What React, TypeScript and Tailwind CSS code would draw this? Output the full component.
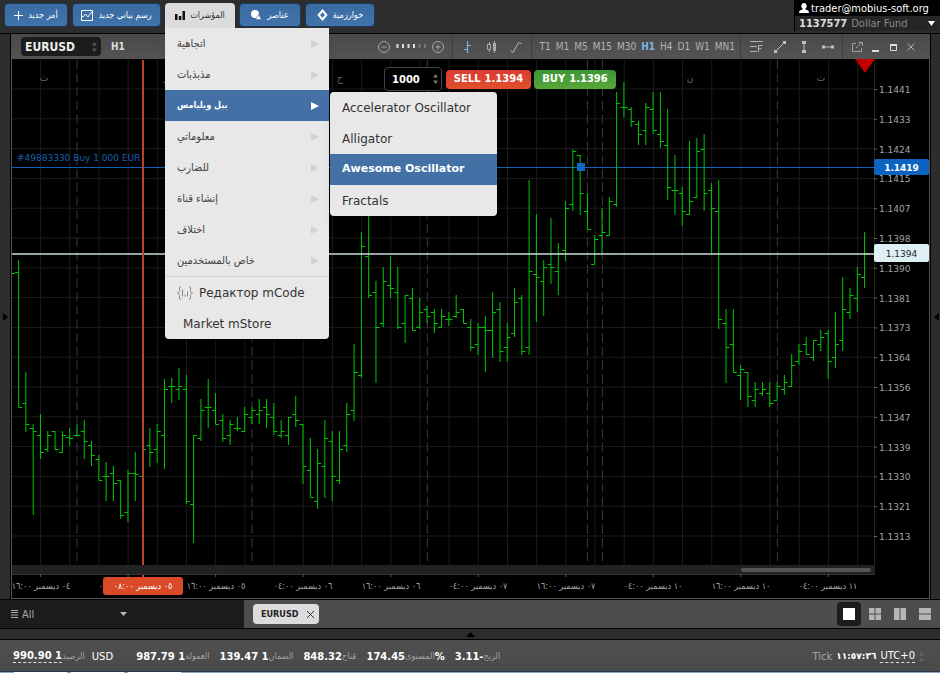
import React, { useState } from 'react';

// [high, low, open, close] in chart coordinates, oldest bar first
const BARS: number[][] = [
  [260, 407, 272, 407], [372, 432, 403, 424], [424, 515, 428, 431], [414, 459, 435, 452],
  [431, 452, 449, 435], [431, 450, 431, 449], [431, 453, 452, 435], [428, 446, 437, 438],
  [424, 436, 435, 435], [420, 459, 431, 441], [441, 466, 445, 455], [455, 480, 459, 480],
  [462, 501, 476, 476], [466, 501, 473, 483], [480, 519, 480, 515], [470, 522, 512, 473],
  [452, 501, 473, 474], [428, 505, 476, 449], [428, 467, 445, 452], [424, 463, 449, 431],
  [379, 469, 435, 389], [378, 403, 386, 386], [368, 400, 389, 386], [375, 504, 389, 501],
  [435, 543, 504, 435], [399, 441, 438, 410], [379, 428, 407, 407], [393, 424, 410, 424],
  [414, 442, 420, 438], [420, 445, 435, 424], [417, 431, 428, 428], [407, 432, 431, 414],
  [407, 424, 417, 410], [399, 424, 414, 410], [399, 428, 407, 414], [403, 435, 417, 431],
  [420, 438, 435, 431], [417, 445, 435, 417], [396, 427, 414, 420], [424, 484, 424, 466],
  [438, 497, 470, 497], [449, 509, 501, 463], [420, 498, 466, 438], [431, 501, 441, 476],
  [431, 484, 480, 449], [403, 452, 445, 414], [344, 421, 410, 372], [232, 378, 375, 246],
  [200, 298, 256, 295], [281, 383, 292, 327], [267, 327, 323, 281], [256, 298, 285, 288],
  [267, 329, 292, 327], [295, 343, 323, 295], [288, 330, 298, 330], [298, 329, 327, 312],
  [306, 323, 309, 316], [309, 333, 312, 323], [309, 327, 327, 316], [312, 326, 319, 319],
  [295, 318, 316, 312], [309, 323, 309, 323], [319, 351, 327, 347], [323, 355, 344, 327],
  [316, 372, 327, 330], [292, 358, 330, 312], [302, 362, 309, 351], [323, 362, 347, 337],
  [288, 337, 333, 302], [295, 355, 298, 351], [180, 355, 347, 271], [214, 322, 274, 277],
  [260, 316, 281, 267], [218, 284, 264, 267], [243, 295, 271, 253], [201, 261, 250, 208],
  [149, 211, 204, 151], [155, 215, 155, 193], [193, 229, 211, 229], [235, 264, 264, 239],
  [208, 253, 235, 232], [197, 236, 235, 201], [92, 207, 204, 103], [82, 117, 107, 107],
  [107, 127, 109, 121], [121, 145, 124, 134], [103, 145, 130, 107], [92, 134, 109, 130],
  [92, 148, 134, 141], [109, 200, 145, 187], [155, 215, 190, 190], [187, 226, 193, 211],
  [141, 215, 214, 201], [138, 198, 197, 151], [134, 211, 149, 193], [183, 253, 190, 208],
  [180, 329, 211, 319], [309, 383, 323, 347], [309, 372, 344, 372], [365, 400, 375, 369],
  [372, 407, 372, 396], [382, 407, 400, 389], [382, 396, 393, 389], [382, 407, 393, 403],
  [382, 400, 400, 386], [375, 395, 389, 382], [354, 387, 386, 365], [344, 365, 361, 351],
  [337, 355, 344, 354], [340, 361, 357, 340], [330, 351, 344, 337], [330, 379, 333, 361],
  [312, 368, 357, 344], [277, 351, 340, 309], [288, 319, 312, 295], [267, 312, 298, 274],
  [232, 288, 277, 253],
];

const PRICES = [
  '1.1441', '1.1433', '1.1424', '1.1415', '1.1407', '1.1398', '1.1390', '1.1381',
  '1.1373', '1.1364', '1.1356', '1.1347', '1.1339', '1.1330', '1.1321', '1.1313',
];

const TIMES = [
  '٠٤ ديسمبر ١٦:٠٠', '٠٥ ديسمبر ٠٤:٠٠', '٠٥ ديسمبر ١٦:٠٠', '٠٦ ديسمبر ٠٤:٠٠', '٠٦ ديسمبر ١٦:٠٠',
  '٠٧ ديسمبر ٠٤:٠٠', '٠٧ ديسمبر ١٦:٠٠', '١٠ ديسمبر ٠٤:٠٠', '١٠ ديسمبر ١٦:٠٠', '١١ ديسمبر ٠٤:٠٠',
];

const DAY_BREAKS = [77, 252, 427.3, 587.4, 602.4, 777.4];
const MONTH_MARKS = [
  { x: 44, label: 'ث' },
  { x: 166, label: 'ر' },
  { x: 340, label: 'خ' },
  { x: 690, label: 'ن' },
  { x: 821, label: 'ث' },
];

const TIMEFRAMES = ['T1', 'M1', 'M5', 'M15', 'M30', 'H1', 'H4', 'D1', 'W1', 'MN1'];

const MENU = ['اتجاهية', 'مذبذبات', 'بيل ويليامس', 'معلوماتي', 'للضارب', 'إنشاء قناة', 'اختلاف', 'خاص بالمستخدمين'];
const SUBMENU = ['Accelerator Oscillator', 'Alligator', 'Awesome Oscillator', 'Fractals'];

const barX = (i: number) => 18.6 + i * 7.293;
const gridX = (i: number) => 40.6 + i * 29.18;
const gridY = (i: number) => 89 + i * 29.8;

function Spinner({ className = '' }: { className?: string }) {
  return (
    <svg width="5" height="10" viewBox="0 0 5 10" className={`pointer-events-none shrink-0 ${className}`} fill="currentColor">
      <path d="M0 3.5 2.5 0 5 3.5zM0 6.5 2.5 10 5 6.5z" />
    </svg>
  );
}

function Chart() {
  return (
    <svg viewBox="12 59 917 539" className="block w-full bg-black font-['DejaVu_Sans_Condensed','DejaVu_Sans',sans-serif]">
      <g stroke="#1c1c1c" fill="none">
        {Array.from({ length: 29 }, (_, i) => <path key={i} d={`M${gridX(i)} 60V565`} />)}
        {PRICES.map((p, i) => <path key={p} d={`M12 ${gridY(i)}H874`} />)}
      </g>
      <path d="M874.5 60V575" stroke="#222" />
      <g stroke="#3a3a3a" strokeDasharray="9.3 4.37">
        {DAY_BREAKS.map((x) => <path key={x} d={`M${x} 59.7V565`} />)}
      </g>
      <g fill="#666" fontSize="10" textAnchor="middle">
        {MONTH_MARKS.map((m) => <text key={m.x} x={m.x} y="81">{m.label}</text>)}
      </g>

      {/* open order level */}
      <path d="M12 167.5H875" stroke="#1462b8" />
      <text x="17" y="161" fontSize="9" fill="#1560b0" className="font-['DejaVu_Sans',sans-serif]">#49883330 Buy 1 000 EUR</text>

      <g stroke="#00c800" fill="none">
        <path d="M12 273.5h3" />
        {BARS.map(([high, low, open, close], i) => (
          <path key={i} d={`M${barX(i)} ${high}V${low}M${barX(i) - 3.5} ${open + 0.5}h3.5M${barX(i)} ${close + 0.5}h3.5`} />
        ))}
      </g>
      <rect x="577" y="163" width="8" height="8" fill="#1266c4" />

      {/* current price */}
      <path d="M12 254H875" stroke="#c9dcdf" strokeWidth="2" strokeOpacity=".75" />
      <path d="M143 60V578" stroke="#b8422b" strokeWidth="2" />
      <path d="M855 59H875L865 73z" fill="#c00000" />

      {/* price axis */}
      <g fill="#a5a5a5" fontSize="9" className="font-['DejaVu_Sans',sans-serif]">
        {PRICES.map((p, i) => (
          <g key={p}>
            <path d={`M874 ${gridY(i) + 0.5}h3`} stroke="#666" />
            <text x="879" y={Math.round(gridY(i)) + 4}>{p}</text>
          </g>
        ))}
      </g>
      <rect x="874" y="159" width="55" height="16" rx="2" fill="#0c64c0" />
      <text x="901.5" y="171" fontSize="9" fill="#fff" textAnchor="middle" className="font-['DejaVu_Sans',sans-serif] font-bold">1.1419</text>
      <rect x="874" y="244" width="55" height="18" rx="2" fill="#dff0f4" />
      <text x="901.5" y="257" fontSize="9" fill="#222" textAnchor="middle" className="font-['DejaVu_Sans',sans-serif]">1.1394</text>

      {/* scroll bar */}
      <rect x="12" y="565" width="862" height="9" fill="#222" />
      <path d="M12 574.5H874" stroke="#333" />
      <rect x="741" y="568" width="130" height="4" rx="2" fill="#555" />

      {/* time axis */}
      <g fill="#a5a5a5" fontSize="9" textAnchor="middle">
        {TIMES.map((t, i) => (
          <g key={t}>
            <path d={`M${gridX(i * 3)} 574v3`} stroke="#555" />
            <text x={Math.round(gridX(i * 3))} y="589" direction="rtl">{t}</text>
          </g>
        ))}
      </g>
      <rect x="103" y="577" width="80" height="18" rx="3" fill="#da4a28" />
      <text x="143" y="589" fontSize="9" fill="#fff" textAnchor="middle" direction="rtl">٠٥ ديسمبر ٠٨:٠٠</text>
    </svg>
  );
}

function IndicatorMenu() {
  const [active, setActive] = useState(2);
  const [chosen, setChosen] = useState(2);

  return (
    <div className="absolute left-0 top-full z-30 flex items-start text-[#333]">
      <ul className="w-[164px] rounded-b-sm bg-[#e8e8e8] shadow-lg">
        {MENU.map((item, i) => (
          <li key={item}>
            <button
              onMouseEnter={() => setActive(i)}
              className={`flex h-[31px] w-full items-center justify-between pl-3 pr-[10px] font-['DejaVu_Sans_Condensed','DejaVu_Sans',sans-serif] ${
                i === active ? 'bg-[#4371a6] text-[9px] font-bold text-white' : 'text-[11px] text-[#444]'
              }`}
            >
              <span dir="rtl">{item}</span>
              <svg width="8" height="8" viewBox="0 0 8 8" className={i === active ? 'text-white' : 'text-[#d2d2d2]'}>
                <path d="M0 0 8 4 0 8z" fill="currentColor" />
              </svg>
            </button>
          </li>
        ))}
        <li className="border-t border-[#d4d4d4]">
          <button className="flex h-8 w-full items-center gap-[6px] px-3 text-xs">
            <svg width="16" height="14" viewBox="0 0 16 14" fill="none" stroke="#888">
              <path d="M4 .5C2 .5 2.500 3 2.500 4.500S2 6.500.5 7C2 7.500 2.500 8 2.500 9.500S2 13.500 4 13.500M12 .5c2 0 1.500 2.500 1.500 4S14 6.500 15.500 7c-1.500.5-2 1-2 2.500s.5 4-1.500 4M5.500 3.500v7M8 8.500v2M10.500 5.500v5" />
            </svg>
            Редактор mCode
          </button>
        </li>
        <li>
          <button className="flex h-[30px] w-full items-center px-[18px] text-xs">Market mStore</button>
        </li>
      </ul>
      <ul className="ml-px mt-16 w-[167px] rounded-sm bg-[#e8e8e8] text-xs shadow-lg">
        {SUBMENU.map((item, i) => (
          <li key={item}>
            <button
              onClick={() => setChosen(i)}
              className={`flex h-[31px] w-full items-center whitespace-nowrap px-3 ${i === chosen ? 'bg-[#4371a6] text-[11px] font-bold text-white' : ''}`}
            >
              {item}
            </button>
          </li>
        ))}
      </ul>
    </div>
  );
}

const blueButton =
  "flex h-6 items-center justify-center rounded-sm border border-[#1b3a5c] bg-linear-to-b from-[#3a6ba3] to-[#4173ab] font-['DejaVu_Sans_Condensed','DejaVu_Sans',sans-serif] text-[9px] whitespace-nowrap text-white";

function TopBar() {
  return (
    <header className="flex h-[34px] justify-between border-b border-black bg-[#2d2d2d]">
      <nav className="flex items-start gap-1 pl-1 pt-[3px]">
        <button className={`${blueButton} w-16 gap-[5px]`}>
          <svg width="9" height="9" viewBox="0 0 9 9" stroke="#fff"><path d="M4.500 0v9M0 4.500h9" /></svg>
          <span dir="rtl">أمر جديد</span>
        </button>
        <button className={`${blueButton} w-[89px] gap-[5px]`}>
          <svg width="12" height="11" viewBox="0 0 12 11" fill="none" stroke="#fff">
            <path d="M.5.5h11v10H.5zM1 6.500h1.500L4.500 4 7 7l3-4.500h1.500" />
          </svg>
          <span dir="rtl">رسم بياني جديد</span>
        </button>
        <div className="relative">
          <button className="flex h-[25px] w-[70px] items-center justify-center gap-[5px] rounded-t-sm bg-[#dcdcdc] font-['DejaVu_Sans_Condensed','DejaVu_Sans',sans-serif] text-[9px] text-[#333]">
            <svg width="10" height="9" viewBox="0 0 10 9" fill="#111"><path d="M0 3h2.500v6H0zM3.800 5h2.500v4H3.800zM7.500 0H10v9H7.500z" /></svg>
            <span dir="rtl">المؤشرات</span>
          </button>
          <IndicatorMenu />
        </div>
        <button className={`${blueButton} w-[62px] gap-[5px]`}>
          <svg width="11" height="10" viewBox="0 0 11 10" fill="#fff"><circle cx="4" cy="4" r="4" /><path d="M7.500 4.500 10.500 9.500H4.500z" stroke="#3e70a8" strokeWidth=".6" /></svg>
          <span dir="rtl">عناصر</span>
        </button>
        <button className={`${blueButton} w-[70px] gap-[5px]`}>
          <svg width="11" height="12" viewBox="0 0 11 12" fill="none" stroke="#fff" strokeWidth="2"><path d="M5.500 1.500 9.300 6 5.500 10.500 1.700 6z" /></svg>
          <span dir="rtl">خوارزمية</span>
        </button>
      </nav>

      <div className="flex h-[31px] w-[146px] flex-col border-l border-black bg-[#262626] font-['DejaVu_Sans_Condensed','DejaVu_Sans',sans-serif]">
        <div className="flex h-4 items-center gap-[2px] bg-black pl-1 text-[11px] text-white">
          <svg width="10" height="10" viewBox="0 0 10 10" fill="#fff"><path d="M5 0a2.600 3 0 0 1 1.500 5.500V6.500C8.500 7 10 7.800 10 10H0C0 7.800 1.500 7 3.500 6.500V5.500A2.600 3 0 0 1 5 0z" /></svg>
          trader@mobius-soft.org
        </div>
        <button className="flex h-[15px] items-center gap-1 pl-1 pr-[5px] text-[11px] text-[#888]">
          <span className="font-bold text-[#ddd]">1137577</span>
          <span>Dollar Fund</span>
          <svg width="7" height="5" viewBox="0 0 7 5" className="ml-auto" fill="#fff"><path d="M0 0h7L3.500 5z" /></svg>
        </button>
      </div>
    </header>
  );
}

const toolIcon = 'flex h-full w-6 items-center justify-center';

function ChartToolbar() {
  const [frame, setFrame] = useState('H1');

  return (
    <div className="flex h-[25px] items-center bg-linear-to-b from-[#494949] to-[#545454] font-['DejaVu_Sans_Condensed','DejaVu_Sans',sans-serif] text-[10px] text-[#b4b4b4]">
      <label className="relative ml-[10px] flex h-[19px] w-20 items-center rounded-sm bg-[#1c1c1c] pr-1">
        <select aria-label="EURUSD" className="h-full w-full appearance-none bg-transparent pl-1 text-xs font-bold text-[#eee] outline-none">
          <option>EURUSD</option>
        </select>
        <Spinner className="text-[#555]" />
      </label>
      <span className="ml-[10px] font-bold text-[#ddd]">H1</span>

      <div className="ml-auto flex h-full items-center">
        <div className="flex h-full items-center gap-1 pr-2">
          <button aria-label="−">
            <svg width="12" height="12" viewBox="0 0 12 12" fill="none" stroke="#a5a5a5"><circle cx="6" cy="6" r="5.500" /><path d="M3.500 6h5" /></svg>
          </button>
          <svg width="34" height="5" viewBox="0 0 34 5">
            <path d="M2.500 0h2v4h-2zM8 0h2v4H8zM13.500 0h2v4h-2zM19 0h2v4h-2z" fill="#ddd" />
            <path d="M24.500 0h2v4h-2zM30 0h2v4h-2z" fill="#777" />
          </svg>
          <button aria-label="+">
            <svg width="12" height="12" viewBox="0 0 12 12" fill="none" stroke="#a5a5a5"><circle cx="6" cy="6" r="5.500" /><path d="M3.500 6h5M6 3.500v5" /></svg>
          </button>
        </div>

        <div className="flex h-full items-center border-l border-[#3e3e3e] px-[3px]">
          <button aria-label="┤" className={toolIcon}>
            <svg width="7" height="12" viewBox="0 0 7 12" stroke="#7eb2e6" fill="none"><path d="M3.500 0v12M0 8.500h3.500M3.500 4.500H7" strokeWidth="1.200" /></svg>
          </button>
          <button aria-label="▯" className={toolIcon}>
            <svg width="10" height="12" viewBox="0 0 10 12" stroke="#ababab" fill="none"><path d="M2.500 1v2M2.500 9v2M.5 3.500h3v5h-3zM7.500 0v12" /><path d="M6 2h3v8H6z" fill="#ababab" stroke="none" /></svg>
          </button>
          <button aria-label="/" className={toolIcon}>
            <svg width="12" height="12" viewBox="0 0 12 12" stroke="#b5b5b5" fill="none"><path d="M.5 9.500 3 11.500 8.500 1.500 11.500 2.500" /></svg>
          </button>
        </div>

        <div className="flex h-full items-center gap-[5px] border-l border-[#3e3e3e] pl-2 pr-[5px]">
          {TIMEFRAMES.map((t) => (
            <button key={t} onClick={() => setFrame(t)} className={t === frame ? 'font-bold text-[#7eb2e6]' : ''}>
              {t}
            </button>
          ))}
        </div>

        <div className="flex h-full items-center border-l border-[#3e3e3e] pl-[3px] pr-[2px]">
          <button aria-label="F" className={toolIcon}>
            <svg width="13" height="13" viewBox="0 0 13 13" stroke="#b0b0b0" fill="none"><path d="M0 1.500h13M0 6.500h7M0 11.500h7M8.500 12V5.500H12.500M8.500 8.500h3" /></svg>
          </button>
          <button aria-label="⟋" className={toolIcon}>
            <svg width="12" height="12" viewBox="0 0 12 12" stroke="#c0c0c0" fill="#c0c0c0"><path d="M1 11 11 1" /><path d="M0 9h3v3H0zM9 0h3v3H9z" stroke="none" /></svg>
          </button>
          <button aria-label="│" className={toolIcon}>
            <svg width="4" height="12" viewBox="0 0 4 12" fill="#c0c0c0"><path d="M0 0h4v3H0zM0 9h4v3H0zM1.500 2h1v8h-1z" /></svg>
          </button>
          <button aria-label="─" className={toolIcon}>
            <svg width="12" height="4" viewBox="0 0 12 4" fill="#c0c0c0"><path d="M0 .5h3v3H0zM9 .5h3v3H9zM2 1.500h8v1H2z" /></svg>
          </button>
        </div>

        <div className="flex h-full items-center gap-2 border-l border-[#3e3e3e] pl-[9px] pr-[15px]">
          <button aria-label="↗">
            <svg width="11" height="10" viewBox="0 0 11 10" stroke="#a0a0a0" fill="none"><path d="M4 1.500H.5v8h9V6M4 6 10 .5M6.500.5H10.500V4" /></svg>
          </button>
          <button aria-label="_">
            <svg width="10" height="10" viewBox="0 0 10 10" fill="#ddd"><path d="M1 8h7v2H1z" /></svg>
          </button>
          <button aria-label="□">
            <svg width="10" height="10" viewBox="0 0 10 10" fill="none" stroke="#ddd"><path d="M1.500 3.500h6v5h-6z" /><path d="M1 3h7" strokeWidth="2" /></svg>
          </button>
          <button aria-label="×">
            <svg width="8" height="8" viewBox="0 0 8 8" stroke="#b5b5b5"><path d="M.5.5l7 7M7.500.5l-7 7" /></svg>
          </button>
        </div>
      </div>
    </div>
  );
}

function TradePanel() {
  return (
    <div className="absolute left-[372px] top-2 z-10 flex items-center text-[10px] font-bold text-white">
      <label className="flex h-6 w-[58px] items-center rounded-sm border border-[#444] bg-black pr-[3px]">
        <input aria-label="1000" defaultValue="1000" className="w-full min-w-0 bg-transparent pl-[7px] text-[10px] font-bold outline-none" />
        <Spinner className="text-[#777]" />
      </label>
      <button className="ml-1 flex h-[19px] w-[85px] items-center justify-center gap-1 rounded-sm bg-linear-to-b from-[#dc3a34] to-[#e0502c]">
        SELL <span>1.1394</span>
      </button>
      <button className="ml-[3px] flex h-[19px] w-[82px] items-center justify-center gap-1 rounded-sm bg-linear-to-b from-[#3c9638] to-[#58a53a]">
        BUY <span>1.1396</span>
      </button>
    </div>
  );
}

function SymbolBar() {
  return (
    <div className="flex h-[29px] border-b border-black bg-[#4d4d4d]">
      <button className="flex w-[244px] items-center gap-1 bg-[#1c1c1c] pl-[11px] font-['DejaVu_Sans_Condensed','DejaVu_Sans',sans-serif] text-[11px] text-[#aaa]">
        <svg width="7" height="8" viewBox="0 0 7 8" fill="#aaa"><path d="M0 0h7v1H0zM0 2h7v1H0zM0 4.500h7v1H0zM0 7h7v1H0z" /></svg>
        <span className="w-[94px] text-left">All</span>
        <svg width="7" height="4" viewBox="0 0 7 4" fill="#bbb"><path d="M0 0h7L3.500 4z" /></svg>
      </button>
      <div className="flex flex-1 items-center justify-between pl-[9px]">
        <div className="flex h-5 w-[66px] items-center justify-between rounded-sm bg-[#dcdcdc] pl-2 pr-[5px] font-['DejaVu_Sans_Condensed','DejaVu_Sans',sans-serif] text-[9px] font-bold text-[#222]">
          EURUSD
          <button aria-label="×">
            <svg width="7" height="7" viewBox="0 0 7 7" stroke="#333"><path d="M0 0l7 7M7 0 0 7" /></svg>
          </button>
        </div>
        <div className="flex items-center pr-[2px] text-[#b5b5b5]">
          <button aria-label="1" className="flex h-6 w-6 items-center justify-center rounded-sm bg-[#1c1c1c] text-white">
            <svg width="12" height="12" fill="currentColor"><path d="M0 0h12v12H0z" /></svg>
          </button>
          <button aria-label="2×2" className="flex h-6 w-[27px] items-center justify-center">
            <svg width="12" height="12" fill="currentColor"><path d="M0 0h5.500v5.500H0zM6.500 0H12v5.500H6.500zM0 6.500h5.500V12H0zM6.500 6.500H12V12H6.500z" /></svg>
          </button>
          <button aria-label="1×2" className="flex h-6 w-6 items-center justify-center">
            <svg width="12" height="12" fill="currentColor"><path d="M0 0h5.500v12H0zM6.500 0H12v12H6.500z" /></svg>
          </button>
          <button aria-label="2×1" className="flex h-6 w-[26px] items-center justify-center">
            <svg width="12" height="12" fill="currentColor"><path d="M0 0h12v5.500H0zM0 6.500h12V12H0z" /></svg>
          </button>
        </div>
      </div>
    </div>
  );
}

function Stat({ value, label, suffix }: { value: string; label: string; suffix?: string }) {
  return (
    <div className="flex items-center">
      <b>{value}</b>
      <span dir="rtl" className="font-['DejaVu_Sans_Condensed','DejaVu_Sans',sans-serif] text-[9px] text-[#a0a0a0]">{label}</span>
      {suffix && <b>{suffix}</b>}
    </div>
  );
}

function StatusBar() {
  return (
    <footer className="flex h-[31px] items-center bg-linear-to-b from-[#505050] to-[#494949] pl-[13px] pr-4 pt-[2px] text-[10px] whitespace-nowrap text-white">
      <button className="border-b border-dashed border-[#ddd] font-bold leading-3">990.90 1</button>
      <span dir="rtl" className="font-['DejaVu_Sans_Condensed','DejaVu_Sans',sans-serif] text-[9px] text-[#a0a0a0]">الرصيد</span>
      <span className="ml-[7px]">USD</span>
      <div className="ml-[23px] flex items-center gap-[10px]">
        <Stat value="987.79 1" label="العمولة" />
        <Stat value="139.47 1" label="الضمان" />
        <Stat value="848.32" label="مُتاح" />
        <Stat value="174.45" label="المستوى" suffix="%" />
        <Stat value="3.11-" label="الربح" />
      </div>
      <div className="ml-auto flex items-center gap-1">
        <span className="text-[#a5a5a5]">Tick</span>
        <b className="text-[9px]">١١:٥٧:٣٦</b>
        <button className="border-b border-dashed border-[#ddd] leading-3">UTC+0</button>
        <Spinner className="text-[#666]" />
      </div>
    </footer>
  );
}

export default function App() {
  return (
    <div className="min-h-screen bg-[#2d2d2d] font-['DejaVu_Sans',sans-serif] leading-none">
      <TopBar />
      <main className="flex border-b border-black">
        <button aria-label="▶" className="flex w-[11px] items-center border-r border-black bg-[#2d2d2d] pl-[3px]">
          <svg width="5" height="8" viewBox="0 0 5 8"><path d="M0 0 5 4 0 8z" /></svg>
        </button>
        <section className="min-w-0 flex-1">
          <ChartToolbar />
          <div className="relative border-x border-b border-[#555]">
            <Chart />
            <TradePanel />
          </div>
        </section>
        <button aria-label="◀" className="flex w-[10px] items-center border-l border-black bg-[#2d2d2d] pl-[3px]">
          <svg width="5" height="8" viewBox="0 0 5 8"><path d="M5 0 0 4l5 4z" /></svg>
        </button>
      </main>
      <SymbolBar />
      <button aria-label="▲" className="flex h-[11px] w-full items-center justify-center border-b border-black bg-[#2d2d2d]">
        <svg width="9" height="5" viewBox="0 0 9 5"><path d="M0 5 4.500 0 9 5z" /></svg>
      </button>
      <StatusBar />
      <div className="flex h-[2px] gap-1 border-t border-[#26384a] bg-[#8ea4ba] pl-[14px]">
        <div className="w-[53px] bg-white" />
        <div className="w-[53px] bg-white" />
        <div className="w-[53px] bg-white" />
      </div>
    </div>
  );
}
